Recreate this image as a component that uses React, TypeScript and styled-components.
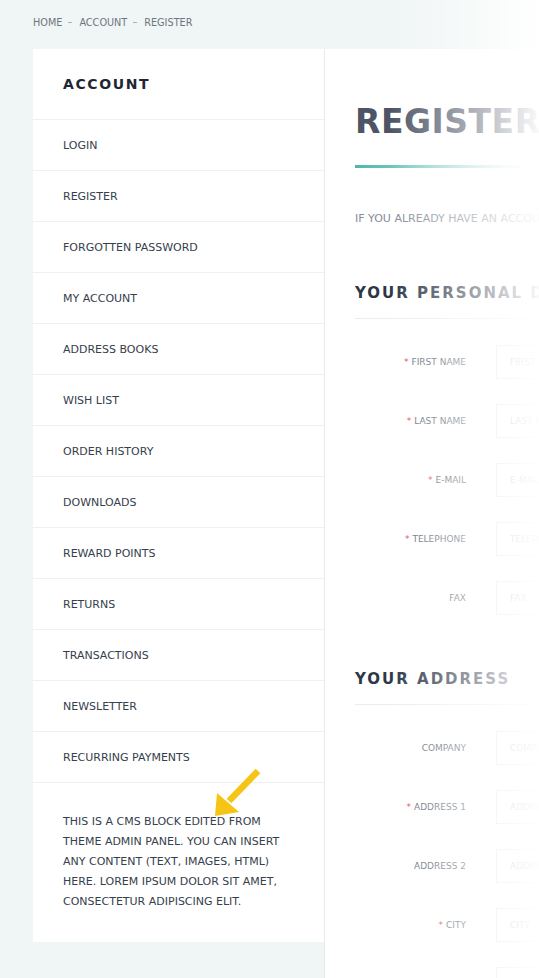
import React from "react";
import styled, { createGlobalStyle } from "styled-components";

const GlobalStyle = createGlobalStyle`
  html, body { margin: 0; padding: 0; background: #f0f5f5; }
  body { font-family: "DejaVu Sans", Verdana, sans-serif; overflow: hidden; }
  * { box-sizing: border-box; }
`;

const Page = styled.div`
  position: relative;
  width: 539px;
  height: 978px;
  overflow: hidden;
  padding-left: 33px;
  background: #f0f5f5;
`;

const Breadcrumb = styled.nav`
  height: 49px;
  padding-top: 17px;
  display: flex;
  align-items: flex-start;
  font-size: 9.7px;
  line-height: 12px;
  color: #6d7580;
`;

const Crumb = styled.span`
  text-transform: uppercase;
`;

const Sep = styled.span`
  display: inline-block;
  width: 4px;
  height: 1px;
  margin: 5px 7px 0 6px;
  background: #aab3bb;
`;

const Row = styled.div`
  display: flex;
  align-items: flex-start;
`;

const Sidebar = styled.aside`
  flex: none;
  width: 291px;
  background: #fff;
`;

const SideHeader = styled.h2`
  margin: 0;
  height: 71px;
  display: flex;
  align-items: center;
  padding: 0 30px;
  font-size: 14px;
  font-weight: 700;
  letter-spacing: 1.6px;
  color: #1f2733;
  border-bottom: 1px solid #edf1f1;
`;

const MenuItem = styled.div`
  height: 51px;
  display: flex;
  align-items: center;
  padding: 0 30px;
  font-size: 11px;
  color: #36404d;
  border-bottom: 1px solid #edf1f1;
`;

const CmsBlock = styled.div`
  padding: 29px 30px 30px;
  font-size: 11px;
  line-height: 20px;
  color: #36404d;
`;

const Main = styled.main`
  flex: none;
  width: 580px;
  min-height: 940px;
  background: #fff;
  border-left: 1px solid #e6ecec;
  padding: 53px 30px 0;
`;

const Title = styled.h1`
  margin: 0;
  font-size: 33px;
  line-height: 40px;
  font-weight: 700;
  letter-spacing: 0.5px;
  color: #4c5466;
`;

const TitleBar = styled.div`
  margin-top: 23px;
  width: 165px;
  height: 3px;
  background: linear-gradient(to right, #4db6ac, rgba(77, 182, 172, 0.15));
`;

const Intro = styled.p`
  margin: 41px 0 0;
  font-size: 11px;
  line-height: 20px;
  color: #848d97;
  white-space: nowrap;
`;

const SectionTitle = styled.h3<{ $gap: number }>`
  margin: ${(p) => p.$gap}px 0 0;
  padding-bottom: 15px;
  font-size: 15px;
  line-height: 20px;
  font-weight: 700;
  letter-spacing: 2px;
  color: #2c3747;
  border-bottom: 1px solid #eaedf0;
`;

const Fields = styled.div`
  display: grid;
  grid-template-columns: 111px 1fr;
  column-gap: 30px;
  row-gap: 25px;
  margin-top: 26px;
`;

const Label = styled.label`
  align-self: center;
  text-align: right;
  font-size: 9px;
  color: #626b76;
  white-space: nowrap;
`;

const Req = styled.span`
  color: #e0474c;
  margin-right: 3px;
`;

const Input = styled.input`
  height: 34px;
  border: 1px solid #dfe3e3;
  padding: 0 13px;
  font-family: "DejaVu Sans", Verdana, sans-serif;
  font-size: 9px;
  color: #555;
  outline: none;
  &::placeholder { color: #a9aeb3; }
`;

const Fade = styled.div`
  position: absolute;
  top: 0;
  right: 0;
  width: 149px;
  height: 100%;
  pointer-events: none;
  background: linear-gradient(to right, rgba(255, 255, 255, 0), rgba(255, 255, 255, 0.97));
`;

const Arrow = styled.svg`
  position: absolute;
  left: 205px;
  top: 765px;
  width: 60px;
  height: 58px;
  pointer-events: none;
`;

const menu = [
  "LOGIN",
  "REGISTER",
  "FORGOTTEN PASSWORD",
  "MY ACCOUNT",
  "ADDRESS BOOKS",
  "WISH LIST",
  "ORDER HISTORY",
  "DOWNLOADS",
  "REWARD POINTS",
  "RETURNS",
  "TRANSACTIONS",
  "NEWSLETTER",
  "RECURRING PAYMENTS",
];

type Field = { label: string; required: boolean };

const personal: Field[] = [
  { label: "FIRST NAME", required: true },
  { label: "LAST NAME", required: true },
  { label: "E-MAIL", required: true },
  { label: "TELEPHONE", required: true },
  { label: "FAX", required: false },
];

const address: Field[] = [
  { label: "COMPANY", required: false },
  { label: "ADDRESS 1", required: true },
  { label: "ADDRESS 2", required: false },
  { label: "CITY", required: true },
  { label: "POST CODE", required: true },
];

function FieldList({ fields }: { fields: Field[] }) {
  return (
    <Fields>
      {fields.map((f) => (
        <React.Fragment key={f.label}>
          <Label>
            {f.required && <Req>*</Req>}
            {f.label}
          </Label>
          <Input placeholder={f.label} />
        </React.Fragment>
      ))}
    </Fields>
  );
}

export default function App() {
  return (
    <>
      <GlobalStyle />
      <Page>
        <Breadcrumb>
          <Crumb>Home</Crumb>
          <Sep />
          <Crumb>Account</Crumb>
          <Sep />
          <Crumb>Register</Crumb>
        </Breadcrumb>
        <Row>
          <Sidebar>
            <SideHeader>ACCOUNT</SideHeader>
            {menu.map((m) => (
              <MenuItem key={m}>{m}</MenuItem>
            ))}
            <CmsBlock>
              THIS IS A CMS BLOCK EDITED FROM THEME ADMIN PANEL. YOU CAN INSERT
              ANY CONTENT (TEXT, IMAGES, HTML) HERE. LOREM IPSUM DOLOR SIT AMET,
              CONSECTETUR ADIPISCING ELIT.
            </CmsBlock>
          </Sidebar>
          <Main>
            <Title>REGISTER</Title>
            <TitleBar />
            <Intro>
              IF YOU ALREADY HAVE AN ACCOUNT WITH US, PLEASE LOGIN AT THE LOGIN PAGE.
            </Intro>
            <SectionTitle $gap={54}>YOUR PERSONAL DETAILS</SectionTitle>
            <FieldList fields={personal} />
            <SectionTitle $gap={54}>YOUR ADDRESS</SectionTitle>
            <FieldList fields={address} />
          </Main>
        </Row>
        <Fade />
        <Arrow viewBox="0 0 60 58">
          <line x1="53" y1="6" x2="24" y2="36" stroke="#f6c414" strokeWidth="6.5" />
          <polygon points="10,51 12,28 34,47" fill="#f6c414" />
        </Arrow>
      </Page>
    </>
  );
}
